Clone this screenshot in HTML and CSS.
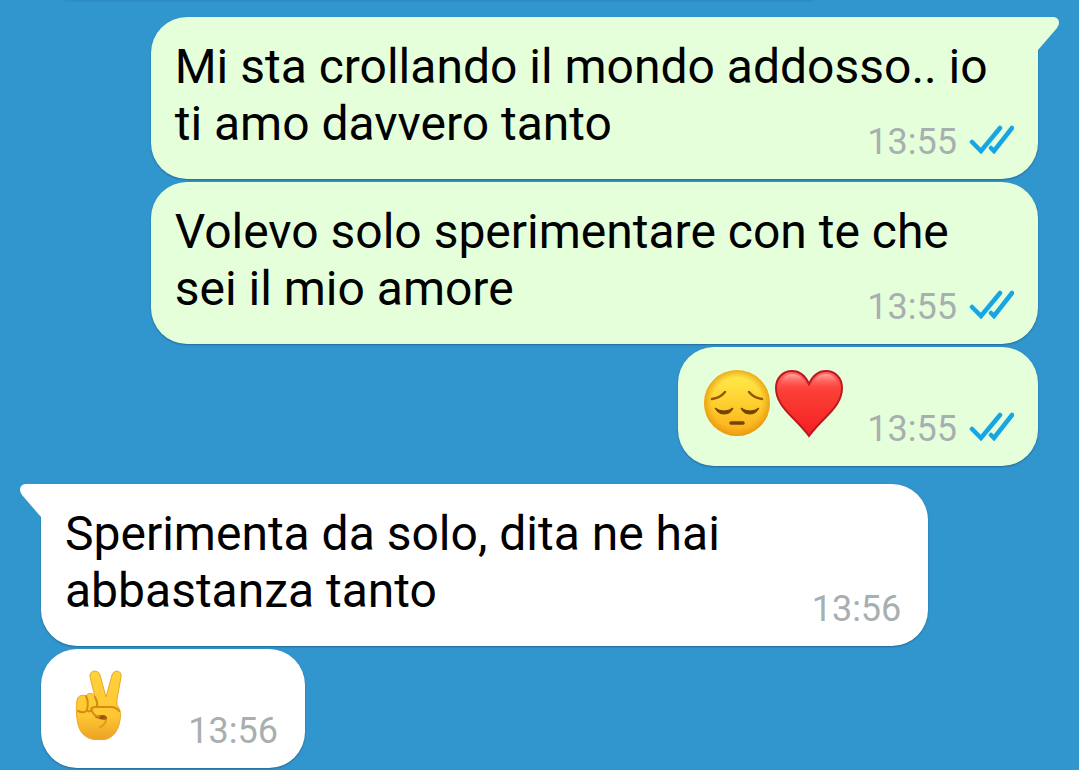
FILE: index.html
```html
<!DOCTYPE html>
<html lang="it">
<head>
    <meta charset="UTF-8">
    <meta name="viewport" content="width=device-width, initial-scale=1.0">
    <title>Chat</title>
    <link rel="stylesheet" href="styles.css">
</head>
<body>
    <svg class="defs" aria-hidden="true">
        <symbol id="checks" viewBox="0 0 46 30">
            <path d="M4 18L13 27L32 4M23 24L26 27L44 4" fill="none" stroke="#16a6e6" stroke-width="4.5" stroke-linecap="round" stroke-linejoin="miter"/>
        </symbol>
        <symbol id="tail" viewBox="0 0 22 34">
            <path d="M0 0H16Q21 1 21 6Q21 8 19 11L0 33Z"/>
        </symbol>
    </svg>

    <main class="chat">
        <div class="previous"></div>

        <div class="message out first">
            <svg class="tail"><use href="#tail"/></svg>
            <p class="text">Mi sta crollando il mondo addosso.. io ti amo davvero tanto
                <span class="meta"><time>13:55</time><svg class="checks"><use href="#checks"/></svg></span>
            </p>
        </div>

        <div class="message out">
            <p class="text">Volevo solo sperimentare con te che sei il mio amore
                <span class="meta"><time>13:55</time><svg class="checks"><use href="#checks"/></svg></span>
            </p>
        </div>

        <div class="message out short">
            <div class="emojis">
                <svg class="emoji" viewBox="0 0 70 70" role="img" aria-label="Faccina pensierosa">
                    <defs>
                        <linearGradient id="faceFill" x1="0" y1="0" x2="0" y2="1">
                            <stop offset="0" stop-color="#fff04f"/>
                            <stop offset=".5" stop-color="#fdcf2e"/>
                            <stop offset="1" stop-color="#fbad1b"/>
                        </linearGradient>
                        <radialGradient id="faceEdge">
                            <stop offset=".75" stop-color="#e99a10" stop-opacity="0"/>
                            <stop offset="1" stop-color="#e3930d" stop-opacity=".75"/>
                        </radialGradient>
                    </defs>
                    <circle cx="35" cy="35" r="33" fill="url(#faceFill)"/>
                    <circle cx="35" cy="35" r="33" fill="url(#faceEdge)"/>
                    <g fill="none" stroke="#965600" stroke-linecap="round">
                        <path d="M10 31Q18 30 23 24M60 31Q52 30 47 24" stroke-width="2.5"/>
                        <path d="M29 55H41" stroke-width="3.5" stroke="#754300"/>
                    </g>
                    <path d="M13 40Q22 46 31 40Q29 46 22 46Q16 46 13 40ZM39 40Q48 46 57 40Q54 46 48 46Q41 46 39 40Z" fill="#754300" stroke="#754300" stroke-linejoin="round"/>
                </svg>
                <svg class="emoji" viewBox="0 0 70 70" role="img" aria-label="Cuore rosso">
                    <defs>
                        <linearGradient id="heartFill" x1="0" y1="0" x2="0" y2="1">
                            <stop offset="0" stop-color="#ff6a62"/>
                            <stop offset=".3" stop-color="#fb4038"/>
                            <stop offset="1" stop-color="#f51e20"/>
                        </linearGradient>
                        <linearGradient id="heartShine" x1="0" y1="0" x2="0" y2="1">
                            <stop offset="0" stop-color="#ffd0cb" stop-opacity=".6"/>
                            <stop offset="1" stop-color="#ff6a62" stop-opacity="0"/>
                        </linearGradient>
                    </defs>
                    <path d="M35 16C31 7 25 3 18 3C9 3 2 10 2 20C2 32 10 41 18 49C25 56 30 61 35 68C40 61 45 56 52 49C60 41 68 32 68 20C68 10 61 3 52 3C45 3 39 7 35 16Z" fill="url(#heartFill)" stroke="#bd1721" stroke-width="2"/>
                    <path d="M6 19C7 10 12 6 18 6C26 6 30 11 33 18ZM37 18C40 11 44 6 52 6C58 6 63 10 64 19Z" fill="url(#heartShine)"/>
                </svg>
            </div>
            <div class="meta"><time>13:55</time><svg class="checks"><use href="#checks"/></svg></div>
        </div>

        <div class="message in first">
            <svg class="tail"><use href="#tail"/></svg>
            <p class="text">Sperimenta da solo, dita ne hai abbastanza tanto
                <span class="meta"><time>13:56</time></span>
            </p>
        </div>

        <div class="message in short">
            <div class="emojis">
                <svg class="emoji" viewBox="-7 0 70 70" role="img" aria-label="Vittoria">
                    <defs>
                        <linearGradient id="handFill" x1="0" y1="0" x2="0" y2="1">
                            <stop offset="0" stop-color="#ffd23c"/>
                            <stop offset=".65" stop-color="#fec733"/>
                            <stop offset="1" stop-color="#eda124"/>
                        </linearGradient>
                    </defs>
                    <path d="M23 27L18 7C17 0 26 -1 28 5L34 27L40 5C42 -1 50 0 49 7L45 29V35C49 40 49 45 48 50C46 63 39 70 28 70C15 70 8 64 6 54C4 46 4 36 5 31C5 26 10 24 14 26C16 22 22 23 23 27Z" fill="url(#handFill)" stroke="#eda526"/>
                    <path d="M25 47Q34 44 34 49Q29 49 25 47Z" fill="#854400" stroke="#a65c06" stroke-width="2"/>
                    <path d="M34 50Q33 55 28 57" fill="none" stroke="#e59b1b" stroke-width="2" stroke-linecap="round"/>
                    <path d="M19 40Q19 37 24 37L39 37Q44 37 47 41M20 41Q22 46 27 47M6 41Q12 44 15 40Q17 43 20 40M14 26Q17 32 15 40M23 27Q26 32 25 37" fill="none" stroke="#d58c12" stroke-width="2" stroke-linecap="round"/>
                </svg>
            </div>
            <div class="meta"><time>13:56</time></div>
        </div>
    </main>
</body>
</html>
```

FILE: styles.css
```css
* {
    box-sizing: border-box;
}

body {
    margin: 0;
    background-color: #3296ce;
    font-family: Roboto, sans-serif;
}

.defs {
    display: none;
}

.chat {
    display: flex;
    flex-direction: column;
    gap: 3px;
    padding: 0 41px 3px;
}

/* shadow of the message scrolled off the top */
.previous {
    width: 75%;
    height: 2px;
    margin: 0 24px -3px;
    background-color: #2f8dc2;
}

.message {
    position: relative;
    width: 89%;
    padding: 21px 24px 16px;
    border-radius: 36px;
    box-shadow: 0 1px 2px rgba(0, 40, 70, 0.4);
}

.out {
    align-self: flex-end;
    background-color: #e5ffdb;
    color: #e5ffdb;
}

.in {
    align-self: flex-start;
    background-color: #fff;
    color: #fff;
}

.first {
    margin-top: 15px;
}

.out.first {
    border-top-right-radius: 0;
}

.in.first {
    border-top-left-radius: 0;
}

.tail {
    position: absolute;
    top: 0;
    left: 100%;
    width: 22px;
    height: 34px;
    fill: currentColor;
}

.in .tail {
    left: auto;
    right: 100%;
    transform: scaleX(-1);
}

.text {
    display: flow-root;
    margin: 0;
    font-size: 48px;
    line-height: 57px;
    color: #000;
}

.meta {
    display: flex;
    align-items: center;
    gap: 11px;
    font-size: 36px;
    line-height: 42px;
    color: #a7afb0;
}

/* time sits at the end of the last line, a bit below it */
.text .meta {
    float: right;
    margin-top: 26px;
}

.in .meta {
    margin-right: 3px;
}

.checks {
    width: 46px;
    height: 30px;
    margin-bottom: 6px;
}

.short {
    display: flex;
    align-items: flex-end;
    justify-content: space-between;
    width: auto;
    min-width: 264px;
    gap: 23px;
}

.emojis {
    display: flex;
    gap: 2px;
    margin-bottom: 12px;
}

.emoji {
    width: 70px;
    height: 70px;
}
```
